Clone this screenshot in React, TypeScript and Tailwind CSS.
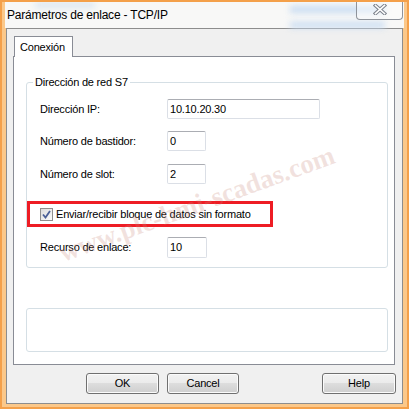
import React from 'react';

const inputCls =
  'h-[20px] border border-[#dbdfe6] border-t-[#abadb3] rounded-[2px] bg-white pl-[2px] flex items-center text-black';

const btnCls =
  'h-[21px] rounded-[3px] border border-[#707070] bg-[linear-gradient(#f2f2f2,#ebebeb_50%,#dddddd_50%,#cfcfcf)] shadow-[inset_0_0_0_1px_#fbfbfb] flex items-center justify-center text-black';

function Field({ label, value, width, mt }: { label: string; value: string; width: string; mt: string }) {
  return (
    <div className={`flex items-center pl-[13px] ${mt}`}>
      <span className="w-[127px]">{label}</span>
      <div className={`${inputCls} ${width}`}>{value}</div>
    </div>
  );
}

export default function App() {
  return (
    <div className="w-[409px] h-[409px] overflow-hidden border-2 border-[#f4a04a] bg-[#fbc88a] px-[4px] pb-[3px] flex flex-col relative font-['Liberation_Sans',Arial,sans-serif] text-[11px] tracking-[-0.2px] text-black">
      {/* Title bar */}
      <div className="h-[26px] shrink-0 bg-[#f8f8f7] relative flex items-center -mx-[1px] pl-[2px]">
        <div className="absolute left-[30px] top-[0px] w-[60px] h-[6px] bg-[#dbe6f2] blur-[3px]" />
        <div className="absolute left-[285px] top-[4px] w-[95px] h-[7px] bg-[#c9dcf2] blur-[3px]" />
        <div className="absolute left-[285px] top-[20px] w-[95px] h-[6px] bg-[#c9dcf2] blur-[3px]" />
        <span className="relative text-[12px] tracking-[-0.2px] -mt-[1px]">Parámetros de enlace - TCP/IP</span>
      </div>

      {/* Close button */}
      <div className="absolute left-[354px] top-[-2px] w-[47px] h-[20px] border border-t-0 border-[#8e939b] rounded-b-[4px] bg-white/40 flex items-center justify-center">
        <svg width="14" height="11" viewBox="0 0 14 11">
          <path d="M2.5 1.5 L11.5 9.5 M11.5 1.5 L2.5 9.5" stroke="#7c828c" strokeWidth="3.6" strokeLinecap="square" />
          <path d="M2.5 1.5 L11.5 9.5 M11.5 1.5 L2.5 9.5" stroke="#ffffff" strokeWidth="1.6" strokeLinecap="square" />
        </svg>
      </div>

      {/* Client area */}
      <div className="flex-1 border border-[#8d8d8d] bg-[#f0f0f0] pl-[6px] pt-[7px] flex flex-col">
        <div className="flex">
          <div className="ml-[1px] w-[59px] h-[21px] -mb-[1px] z-10 bg-white border border-b-0 border-[#898c95] flex items-center pl-[5px]">
            Conexión
          </div>
        </div>
        <div className="w-[382px] h-[309px] border border-[#898c95] bg-white pl-[12px] pt-[25px] flex flex-col">
          {/* Group box */}
          <div className="w-[362px] h-[186px] border border-[#d5dfe5] rounded-[3px] relative pt-[16px]">
            <span className="absolute left-[6px] -top-[8px] bg-white px-[2px] leading-[14px]">Dirección de red S7</span>
            <Field label="Dirección IP:" value="10.10.20.30" width="w-[153px]" mt="" />
            <Field label="Número de bastidor:" value="0" width="w-[39px]" mt="mt-[12px]" />
            <Field label="Número de slot:" value="2" width="w-[39px]" mt="mt-[13px]" />
            <div className="mt-[17px] w-[246px] h-[26px] border-[3px] border-[#ee1c24] flex items-center pl-[10px]">
              <div className="w-[13px] h-[13px] border border-[#8f8f8f] bg-[linear-gradient(135deg,#dcdcdc,#fbfbfb)] p-[1px] flex items-center justify-center">
                <svg width="9" height="9" viewBox="0 0 9 9">
                  <path d="M1 4.5 L3.5 7.5 L8 1" fill="none" stroke="#4a5f97" strokeWidth="1.8" />
                </svg>
              </div>
              <span className="ml-[3px]">Enviar/recibir bloque de datos sin formato</span>
            </div>
            <div className="flex items-center pl-[13px] mt-[10px]">
              <span className="w-[127px]">Recurso de enlace:</span>
              <div className={`${inputCls} w-[40px] h-[21px]`}>10</div>
            </div>
          </div>
          {/* Info box */}
          <div className="mt-[40px] w-[362px] h-[44px] border border-[#d5dfe5] rounded-[3px]" />
        </div>

        {/* Buttons */}
        <div className="flex mt-[8px] pr-[6px]">
          <div className={`${btnCls} ml-[73px] w-[73px]`}>OK</div>
          <div className={`${btnCls} ml-[8px] w-[72px]`}>Cancel</div>
          <div className={`${btnCls} ml-auto w-[74px]`}>Help</div>
        </div>
      </div>

      {/* Watermark */}
      <div className="absolute left-[195px] top-[202px] -translate-x-1/2 -translate-y-1/2 rotate-[-20deg] whitespace-nowrap font-['Liberation_Serif',serif] font-bold text-[27px] tracking-[0px] text-[#c98a7c]/25 pointer-events-none">
        www.plc-hmi-scadas.com
      </div>
    </div>
  );
}
